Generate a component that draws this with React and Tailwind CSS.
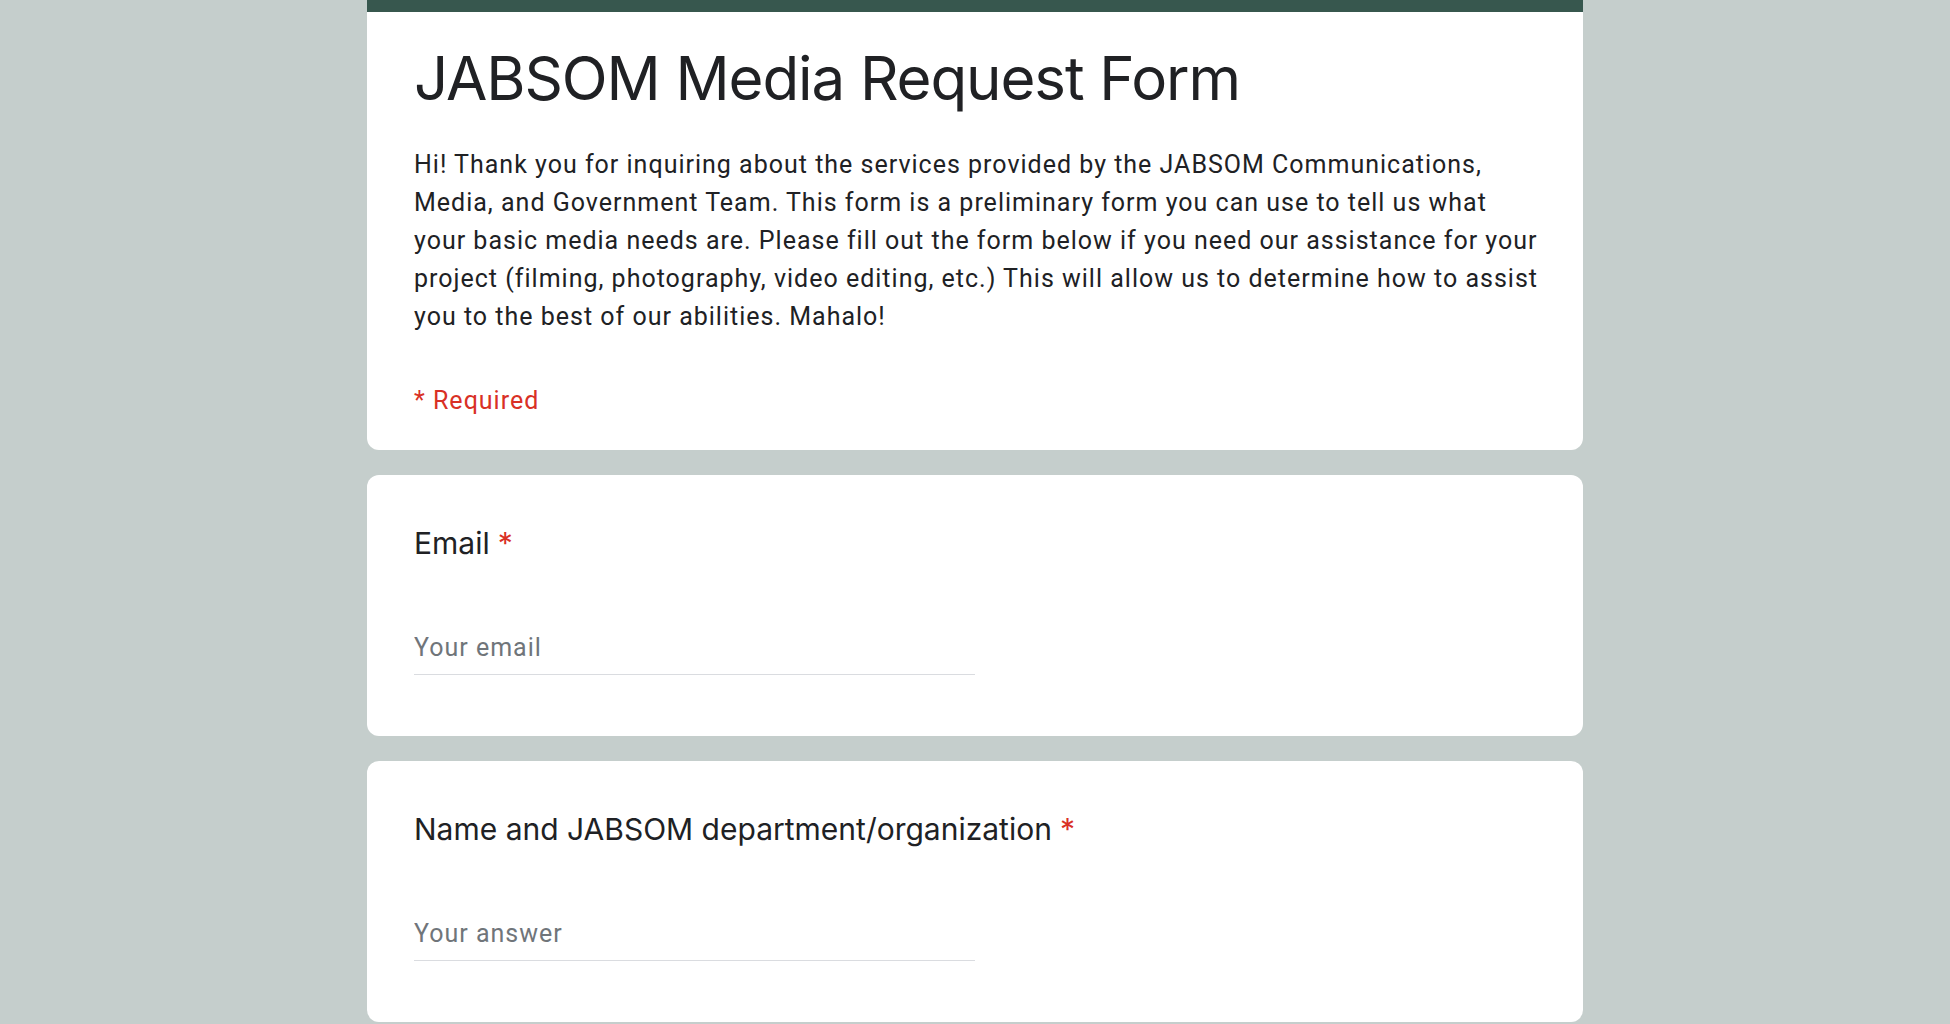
import { useState } from 'react';

const descLines = [
  'Hi! Thank you for inquiring about the services provided by the JABSOM Communications,',
  'Media, and Government Team. This form is a preliminary form you can use to tell us what',
  'your basic media needs are. Please fill out the form below if you need our assistance for your',
  'project (filming, photography, video editing, etc.) This will allow us to determine how to assist',
  'you to the best of our abilities. Mahalo!',
];

const Question = ({ label, placeholder, type = 'text' }) => {
  const [value, setValue] = useState('');
  return (
    <div className="bg-white rounded-[12px] px-[47px] pt-[46px] pb-[61px]">
      <div className="text-[30px] leading-[45px] text-[#202124] font-['Inter','Noto_Sans',sans-serif]">
        {label}
        <span className="text-[#d93025] ml-[8px]">*</span>
      </div>
      <input
        type={type}
        value={value}
        onChange={(e) => setValue(e.target.value)}
        placeholder={placeholder}
        className="mt-[65px] block w-[561px] h-[44px] pb-[11px] bg-transparent outline-none border-b border-[#dadce0] text-[25px] tracking-[1px] text-[#202124] placeholder:text-[#70757a] font-['Roboto',sans-serif]"
      />
    </div>
  );
};

const App = () => {
  return (
    <div className="min-h-screen bg-[#c5cecc] flex flex-col items-center">
      <div className="w-[1216px] flex flex-col gap-[25px] pb-[4px]">
        {/* Header card */}
        <div className="bg-white rounded-b-[12px] overflow-hidden">
          <div className="h-[12px] bg-[#37574e]" />
          <div className="px-[47px] pt-[29px] pb-[30px]">
            <h1 className="text-[60px] leading-[75px] text-[#202124] font-['Inter','Noto_Sans',sans-serif] tracking-[-1.1px]">
              JABSOM Media Request Form
            </h1>
            <div className="mt-[30px] text-[25px] leading-[38px] tracking-[1px] text-[#202124] font-['Roboto',sans-serif]">
              {descLines.map((line) => (
                <div key={line} className="whitespace-nowrap">
                  {line}
                </div>
              ))}
            </div>
            <div className="mt-[46px] text-[25px] leading-[38px] tracking-[1px] text-[#d93025] font-['Roboto',sans-serif]">
              * Required
            </div>
          </div>
        </div>

        <Question label="Email" placeholder="Your email" type="email" />
        <Question label="Name and JABSOM department/organization" placeholder="Your answer" />
      </div>
    </div>
  );
};

export default App;
